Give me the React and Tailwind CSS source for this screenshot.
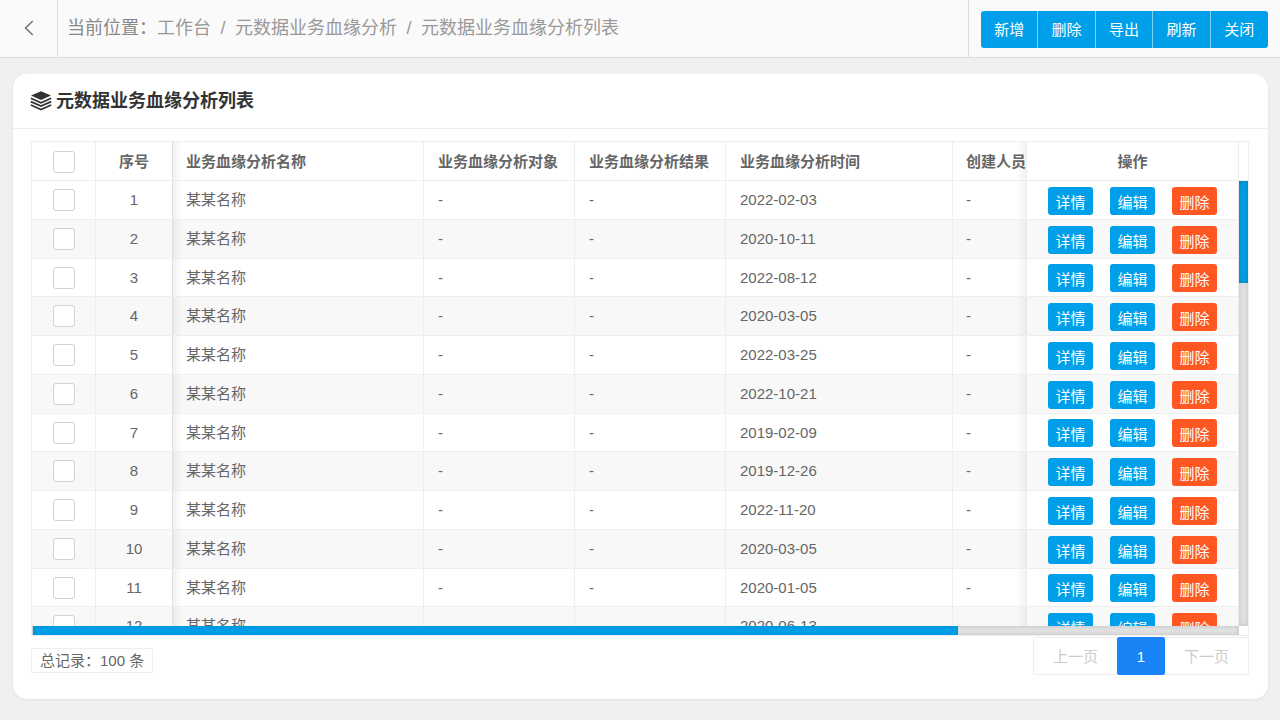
const FONT =
  "font-['Liberation_Sans','Noto_Sans_CJK_SC',sans-serif]";

const toolbar = ['新增', '删除', '导出', '刷新', '关闭'];

const dates = [
  '2022-02-03', '2020-10-11', '2022-08-12', '2020-03-05', '2022-03-25',
  '2022-10-21', '2019-02-09', '2019-12-26', '2022-11-20', '2020-03-05',
  '2020-01-05', '2020-06-13',
];

const rows = dates.map((date, i) => ({ id: i + 1, name: '某某名称', date }));

const CELL = 'border-r border-b border-[#eeeeee] p-0';
const LEFT_SHADE =
  "after:absolute after:inset-y-0 after:left-full after:w-2.5 after:bg-linear-to-r after:from-black/6 after:to-transparent after:content-['']";
const RIGHT_SHADE =
  "before:absolute before:inset-y-0 before:right-full before:w-2.5 before:bg-linear-to-l before:from-black/6 before:to-transparent before:content-['']";

function LayersIcon() {
  return (
    <svg viewBox="0 0 22 20" className="h-5 w-[22px]" fill="#333333" aria-hidden="true">
      <path d="M11 0.2 21 4.6 11 9 1 4.6Z" />
      <g fill="none" stroke="#333333" strokeWidth="1.7">
        <path d="M0.8 7.2 11 11.7 21.2 7.2" />
        <path d="M0.8 10.6 11 15.1 21.2 10.6" />
        <path d="M0.8 14 11 18.5 21.2 14" />
      </g>
    </svg>
  );
}

function Check({ label }) {
  return (
    <input
      type="checkbox"
      aria-label={label}
      className="mx-auto block size-[22px] appearance-none rounded-[3px] border border-[#d2d2d2] bg-white checked:bg-[#009fe9]"
    />
  );
}

function RowButton({ children, danger }) {
  return (
    <button
      type="button"
      className={`h-7 w-[45px] rounded-[3px] pt-1 text-[15px] leading-6 text-white ${danger ? 'bg-[#ff5722]' : 'bg-[#009fe9]'}`}
    >
      {children}
    </button>
  );
}

function DataTable() {
  return (
    <div className="grid min-h-0 flex-1 grid-cols-[minmax(0,1fr)_9px] grid-rows-[minmax(0,1fr)_9px] border border-[#eeeeee]">
      <div className="overflow-auto [scrollbar-width:none]">
        <table className="w-[1575px] min-w-full table-fixed border-separate border-spacing-0 text-left text-[15px] leading-5 text-[#666666]">
          <colgroup>
            <col className="w-16" />
            <col className="w-[77px]" />
            <col className="w-[251px]" />
            <col className="w-[151px]" />
            <col className="w-[151px]" />
            <col className="w-[227px]" />
            <col />
            <col className="w-[212px]" />
          </colgroup>
          <thead className="sticky top-0 z-20 bg-white">
            <tr className="h-[39px] *:pt-0.5 *:font-bold">
              <th className={`${CELL} sticky left-0 z-10 bg-white`}>
                <Check label="全选" />
              </th>
              <th className={`${CELL} ${LEFT_SHADE} sticky left-16 z-10 bg-white text-center`}>序号</th>
              <th className={`${CELL} pl-[13px]`}>业务血缘分析名称</th>
              <th className={`${CELL} pl-[14px]`}>业务血缘分析对象</th>
              <th className={`${CELL} pl-[14px]`}>业务血缘分析结果</th>
              <th className={`${CELL} pl-[14px]`}>业务血缘分析时间</th>
              <th className={`${CELL} pl-[13px]`}>创建人员</th>
              <th className={`${CELL} ${RIGHT_SHADE} sticky right-0 z-10 bg-white text-center`}>操作</th>
            </tr>
          </thead>
          <tbody>
            {rows.map((row) => (
              <tr
                key={row.id}
                className="h-[39px] bg-white even:bg-[#f8f8f8] [&:nth-child(4n+3)]:h-[38px]"
              >
                <td className={`${CELL} sticky left-0 z-10 bg-inherit`}>
                  <Check label={`选择第 ${row.id} 行`} />
                </td>
                <td className={`${CELL} ${LEFT_SHADE} sticky left-16 z-10 bg-inherit text-center`}>{row.id}</td>
                <td className={`${CELL} pl-[13px]`}>{row.name}</td>
                <td className={`${CELL} pl-[14px]`}>-</td>
                <td className={`${CELL} pl-[14px]`}>-</td>
                <td className={`${CELL} pl-[14px]`}>{row.date}</td>
                <td className={`${CELL} pl-[13px]`}>-</td>
                <td className={`${CELL} ${RIGHT_SHADE} sticky right-0 z-10 bg-inherit`}>
                  <div className="flex justify-center gap-[17px] pt-px">
                    <RowButton>详情</RowButton>
                    <RowButton>编辑</RowButton>
                    <RowButton danger>删除</RowButton>
                  </div>
                </td>
              </tr>
            ))}
          </tbody>
        </table>
      </div>
      <div className="flex flex-col">
        <div className="h-[39px] border-b border-[#eeeeee]" />
        <div className="flex-1 bg-[#e2e2e2] shadow-[inset_0_0_5px_rgba(0,0,0,0.15)]">
          <div className="h-[23%] bg-[#009fe9] shadow-[inset_0_0_5px_rgba(0,0,0,0.2)]" />
        </div>
      </div>
      <div className="bg-[#e2e2e2] pl-px shadow-[inset_0_0_5px_rgba(0,0,0,0.15)]">
        <div className="h-full w-[925px] max-w-full bg-[#009fe9] shadow-[inset_0_0_5px_rgba(0,0,0,0.1)]" />
      </div>
      <div className="bg-white" />
    </div>
  );
}

function TopBar() {
  return (
    <header className="flex h-[58px] shrink-0 border-b border-[#dddddd] bg-[#fafafa]">
      <button
        type="button"
        aria-label="返回"
        className="flex w-[58px] items-center justify-center border-r border-[#dddddd] pb-0.5"
      >
        <svg viewBox="0 0 10 16" className="h-4 w-2.5" fill="none" stroke="#777777" strokeWidth="1.6" aria-hidden="true">
          <path d="M8.8 1 1.6 8l7.2 7" />
        </svg>
      </button>
      <nav className="flex flex-1 items-center pb-0.5 pl-[9px] text-lg text-[#999999]">
        <span className="text-[#888888]">当前位置：</span>
        <a href="#workbench">工作台</a>
        <span className="w-6 text-center">/</span>
        <a href="#lineage">元数据业务血缘分析</a>
        <span className="w-6 text-center">/</span>
        <a href="#list">元数据业务血缘分析列表</a>
      </nav>
      <div className="flex items-center border-l border-[#dddddd] px-3 pt-0.5">
        <div className="grid h-[37px] w-[287px] grid-cols-5 overflow-hidden rounded-[3px] bg-[#009fe9]">
          {toolbar.map((label) => (
            <button
              key={label}
              type="button"
              className="border-r border-[#80cff4] pt-0.5 text-[15px] text-white last:border-r-0"
            >
              {label}
            </button>
          ))}
        </div>
      </div>
    </header>
  );
}

export default function App() {
  return (
    <div className={`flex h-screen flex-col bg-[#f0f0f0] ${FONT}`}>
      <TopBar />
      <main className="mt-4 mr-3 mb-[21px] ml-[13px] flex min-h-0 flex-1 flex-col rounded-[14px] bg-white shadow-[0_1px_3px_rgba(0,0,0,0.06)]">
        <h1 className="flex h-[55px] shrink-0 items-center gap-1 border-b border-[#eeeeee] px-[17px] text-lg font-bold text-[#333333]">
          <LayersIcon />
          元数据业务血缘分析列表
        </h1>
        <section className="flex min-h-0 flex-1 flex-col pt-3 pr-[19px] pb-6 pl-[18px]">
          <DataTable />
          <div className="flex items-center justify-between pt-px text-[15px]">
            <p className="mt-2 rounded-xs border border-[#eeeeee] px-2 leading-[23px] text-[#666666]">
              总记录：100 条
            </p>
            <div className="flex h-[38px] text-[#cccccc] *:pt-0.5">
              <button type="button" disabled className="w-[84px] rounded-l-xs border border-r-0 border-[#eeeeee]">
                上一页
              </button>
              <button type="button" className="w-12 rounded-xs bg-[#1a84f7] text-white">
                1
              </button>
              <button type="button" disabled className="w-[84px] rounded-r-xs border border-l-0 border-[#eeeeee]">
                下一页
              </button>
            </div>
          </div>
        </section>
      </main>
    </div>
  );
}
